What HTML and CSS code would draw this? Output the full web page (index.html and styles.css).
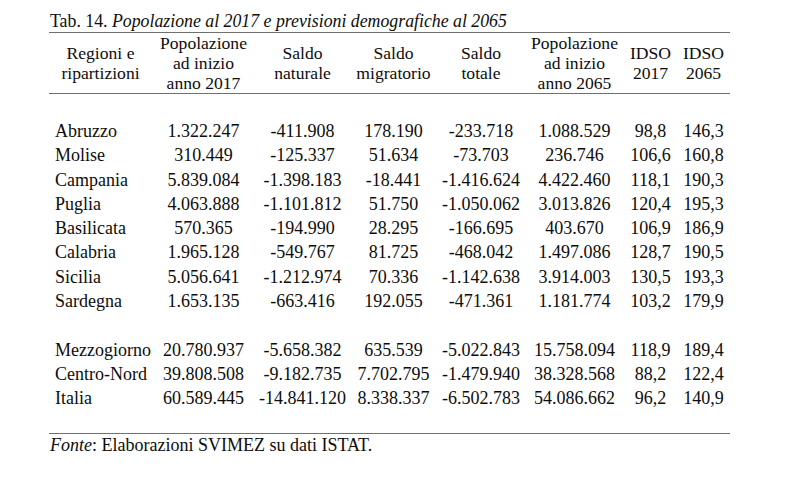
FILE: index.html
```html
<!DOCTYPE html>
<html lang="it">
<head>
<meta charset="utf-8">
<title>Tab. 14</title>
<link rel="stylesheet" href="styles.css">
</head>
<body>
<div class="page">
  <p class="caption">Tab. 14. <i>Popolazione al 2017 e previsioni demografiche al 2065</i></p>
  <table class="data">
    <colgroup>
      <col class="c1"><col class="c2"><col class="c3"><col class="c4"><col class="c5"><col class="c6"><col class="c7"><col class="c8">
    </colgroup>
    <thead>
      <tr>
        <th>Regioni e<br>ripartizioni</th>
        <th>Popolazione<br>ad inizio<br>anno 2017</th>
        <th>Saldo<br>naturale</th>
        <th>Saldo<br>migratorio</th>
        <th>Saldo<br>totale</th>
        <th>Popolazione<br>ad inizio<br>anno 2065</th>
        <th>IDSO<br>2017</th>
        <th>IDSO<br>2065</th>
      </tr>
    </thead>
    <tbody>
      <tr class="spacer top"><td colspan="8"></td></tr>
      <tr><td>Abruzzo</td><td>1.322.247</td><td>-411.908</td><td>178.190</td><td>-233.718</td><td>1.088.529</td><td>98,8</td><td>146,3</td></tr>
      <tr><td>Molise</td><td>310.449</td><td>-125.337</td><td>51.634</td><td>-73.703</td><td>236.746</td><td>106,6</td><td>160,8</td></tr>
      <tr><td>Campania</td><td>5.839.084</td><td>-1.398.183</td><td>-18.441</td><td>-1.416.624</td><td>4.422.460</td><td>118,1</td><td>190,3</td></tr>
      <tr><td>Puglia</td><td>4.063.888</td><td>-1.101.812</td><td>51.750</td><td>-1.050.062</td><td>3.013.826</td><td>120,4</td><td>195,3</td></tr>
      <tr><td>Basilicata</td><td>570.365</td><td>-194.990</td><td>28.295</td><td>-166.695</td><td>403.670</td><td>106,9</td><td>186,9</td></tr>
      <tr><td>Calabria</td><td>1.965.128</td><td>-549.767</td><td>81.725</td><td>-468.042</td><td>1.497.086</td><td>128,7</td><td>190,5</td></tr>
      <tr><td>Sicilia</td><td>5.056.641</td><td>-1.212.974</td><td>70.336</td><td>-1.142.638</td><td>3.914.003</td><td>130,5</td><td>193,3</td></tr>
      <tr><td>Sardegna</td><td>1.653.135</td><td>-663.416</td><td>192.055</td><td>-471.361</td><td>1.181.774</td><td>103,2</td><td>179,9</td></tr>
      <tr class="spacer"><td colspan="8"></td></tr>
      <tr><td>Mezzogiorno</td><td>20.780.937</td><td>-5.658.382</td><td>635.539</td><td>-5.022.843</td><td>15.758.094</td><td>118,9</td><td>189,4</td></tr>
      <tr><td>Centro-Nord</td><td>39.808.508</td><td>-9.182.735</td><td>7.702.795</td><td>-1.479.940</td><td>38.328.568</td><td>88,2</td><td>122,4</td></tr>
      <tr><td>Italia</td><td>60.589.445</td><td>-14.841.120</td><td>8.338.337</td><td>-6.502.783</td><td>54.086.662</td><td>96,2</td><td>140,9</td></tr>
      <tr class="spacer bottom"><td colspan="8"></td></tr>
    </tbody>
  </table>
  <p class="source"><i>Fonte</i>: Elaborazioni SVIMEZ su dati ISTAT.</p>
</div>
</body>
</html>
```

FILE: styles.css
```css
html, body {
  margin: 0;
  padding: 0;
  background: #ffffff;
}

body {
  font-family: "Liberation Serif", Tinos, "Times New Roman", serif;
  color: #0d0d0d;
}

.page {
  padding: 11px 0 0 49px;
  width: 681px;
}

.caption {
  margin: 0;
  font-size: 17.8px;
  line-height: 21px;
  height: 21px;
  padding-left: 1px;
  white-space: nowrap;
}

.data {
  border-collapse: collapse;
  table-layout: fixed;
  width: 681px;
  font-size: 18px;
}

.c1 { width: 103px; }
.c2 { width: 103px; }
.c3 { width: 95px; }
.c4 { width: 87px; }
.c5 { width: 88px; }
.c6 { width: 99px; }
.c7 { width: 53px; }
.c8 { width: 53px; }

.data thead tr {
  border-top: 1.5px solid #707070;
  border-bottom: 1.5px solid #707070;
}

.data th {
  font-weight: normal;
  font-size: 17.6px;
  line-height: 20px;
  height: 60px;
  padding: 0;
  text-align: center;
  vertical-align: middle;
}

.data td {
  padding: 0;
  height: 24.3px;
  line-height: 24.3px;
  text-align: center;
  white-space: nowrap;
}

.data td:first-child {
  text-align: left;
  padding-left: 6px;
}

.data .spacer td {
  height: 24.3px;
}

.data .spacer.top td {
  height: 25px;
}

.data .spacer.bottom td {
  height: 22px;
  border-bottom: 1.5px solid #707070;
}

.source {
  margin: 1px 0 0;
  font-size: 18px;
  line-height: 20px;
  padding-left: 1px;
}
```
